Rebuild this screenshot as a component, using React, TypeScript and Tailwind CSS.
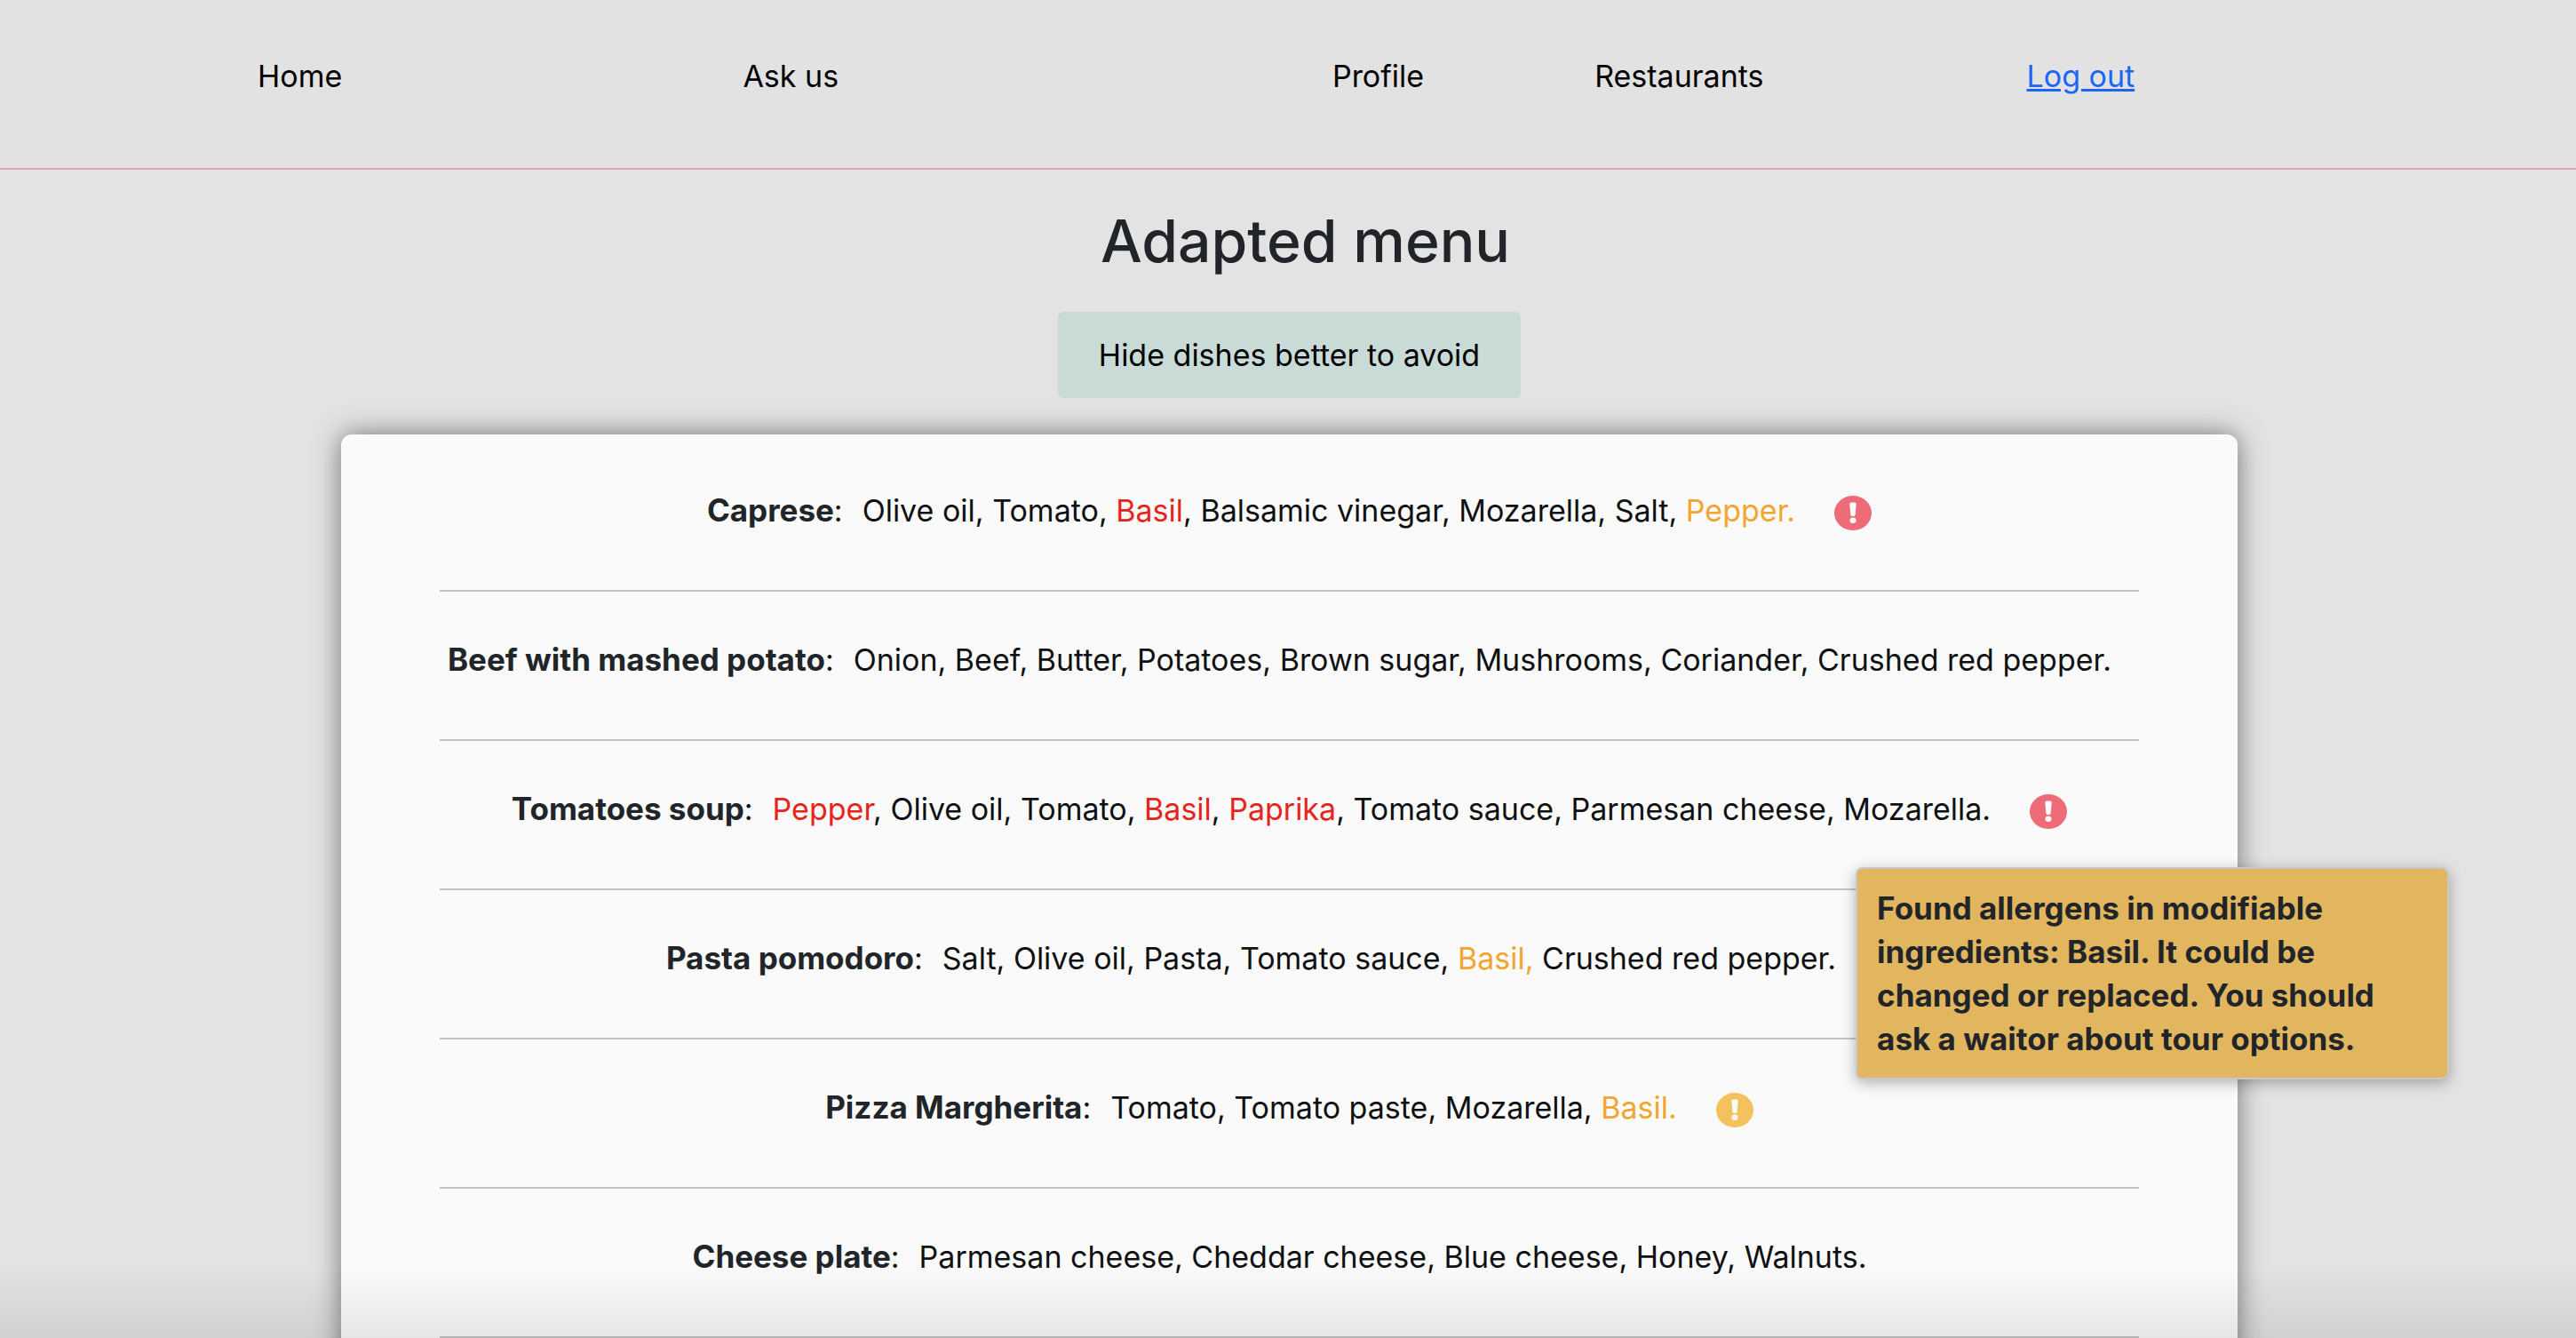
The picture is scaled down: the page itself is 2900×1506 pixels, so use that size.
type Level = 'avoid' | 'modifiable';

type Ingredient = { name: string; level?: Level };

type Dish = {
  name: string;
  ingredients: Ingredient[];
  alert?: Level;
  tooltip?: string;
};

const dishes: Dish[] = [
  {
    name: 'Caprese',
    ingredients: [
      { name: 'Olive oil' },
      { name: 'Tomato' },
      { name: 'Basil', level: 'avoid' },
      { name: 'Balsamic vinegar' },
      { name: 'Mozarella' },
      { name: 'Salt' },
      { name: 'Pepper', level: 'modifiable' },
    ],
    alert: 'avoid',
  },
  {
    name: 'Beef with mashed potato',
    ingredients: [
      { name: 'Onion' },
      { name: 'Beef' },
      { name: 'Butter' },
      { name: 'Potatoes' },
      { name: 'Brown sugar' },
      { name: 'Mushrooms' },
      { name: 'Coriander' },
      { name: 'Crushed red pepper' },
    ],
  },
  {
    name: 'Tomatoes soup',
    ingredients: [
      { name: 'Pepper', level: 'avoid' },
      { name: 'Olive oil' },
      { name: 'Tomato' },
      { name: 'Basil', level: 'avoid' },
      { name: 'Paprika', level: 'avoid' },
      { name: 'Tomato sauce' },
      { name: 'Parmesan cheese' },
      { name: 'Mozarella' },
    ],
    alert: 'avoid',
  },
  {
    name: 'Pasta pomodoro',
    ingredients: [
      { name: 'Salt' },
      { name: 'Olive oil' },
      { name: 'Pasta' },
      { name: 'Tomato sauce' },
      { name: 'Basil', level: 'modifiable' },
      { name: 'Crushed red pepper' },
    ],
    alert: 'modifiable',
    tooltip:
      'Found allergens in modifiable ingredients: Basil. It could be changed or replaced. You should ask a waitor about tour options.',
  },
  {
    name: 'Pizza Margherita',
    ingredients: [
      { name: 'Tomato' },
      { name: 'Tomato paste' },
      { name: 'Mozarella' },
      { name: 'Basil', level: 'modifiable' },
    ],
    alert: 'modifiable',
  },
  {
    name: 'Cheese plate',
    ingredients: [
      { name: 'Parmesan cheese' },
      { name: 'Cheddar cheese' },
      { name: 'Blue cheese' },
      { name: 'Honey' },
      { name: 'Walnuts' },
    ],
  },
];

function AlertIcon({ kind }: { kind: Level }) {
  return (
    <svg
      viewBox="0 0 42 39"
      className={kind === 'avoid' ? 'h-[39px] w-[42px] text-[#ee6b78]' : 'h-[39px] w-[42px] text-[#f5c15e]'}
      role="img"
      aria-label={kind === 'avoid' ? 'Better to avoid' : 'Can be modified'}
    >
      <ellipse cx="21" cy="19.5" rx="21" ry="19.5" fill="currentColor" />
      <path
        d="M17.3 9.6Q17.2 7.6 19.2 7.6H22.8Q24.8 7.6 24.7 9.6L23.6 21.6Q23.4 23.3 21 23.3Q18.6 23.3 18.4 21.6Z"
        fill="#fafafa"
      />
      <ellipse cx="21" cy="27.8" rx="3.5" ry="3.2" fill="#fafafa" />
    </svg>
  );
}

function IngredientText({ item, last }: { item: Ingredient; last: boolean }) {
  const mark = last ? '.' : ',';
  const gap = last ? '' : ' ';
  if (item.level === 'avoid') {
    return (
      <>
        <span className="text-[#e8241a]">{item.name}</span>
        {mark + gap}
      </>
    );
  }
  if (item.level === 'modifiable') {
    return (
      <>
        <span className="text-[#f3a533]">{item.name + mark}</span>
        {gap}
      </>
    );
  }
  return <>{item.name + mark + gap}</>;
}

function DishRow({ dish }: { dish: Dish }) {
  return (
    <li className="flex items-center justify-center whitespace-nowrap border-b-2 border-[#c4c4c4] pt-[51px] pb-[63px] text-[34px] leading-[52px] text-[#0f1012]">
      <p>
        <strong className="text-[35px] leading-none font-bold text-[#212529]">{dish.name}</strong>:
      </p>
      <p className="mx-[22px]">
        {dish.ingredients.map((item, i) => (
          <IngredientText key={item.name} item={item} last={i === dish.ingredients.length - 1} />
        ))}
      </p>
      {dish.alert && (
        <div className="relative mt-1 ml-[22px]">
          <AlertIcon kind={dish.alert} />
          {dish.tooltip && (
            <div
              role="tooltip"
              className="absolute -top-[86px] -left-[22px] z-10 w-[668px] whitespace-normal rounded-lg border-2 border-[#c8c8c8] bg-[#e1b65e] px-[22px] pt-[20px] pb-[19px] text-[35px] leading-[49px] font-bold text-[#212529] shadow-[0_4px_16px_rgba(0,0,0,0.3)]"
            >
              {dish.tooltip}
            </div>
          )}
        </div>
      )}
    </li>
  );
}

export default function App() {
  return (
    <div className="h-screen overflow-hidden bg-[#e3e3e3] font-['Inter','Liberation_Sans',sans-serif] text-[#212529]">
      <header className="border-b-2 border-[#e5a0b2] bg-[#e2e2e2]">
        <nav className="grid grid-cols-[546fr_663fr_295fr_486fr_618fr] pt-[61px] pb-[78px] pl-[10%] text-[34px] leading-[50px] text-black">
          <div><a href="#home">Home</a></div>
          <div><a href="#ask">Ask us</a></div>
          <div><a href="#profile">Profile</a></div>
          <div><a href="#restaurants">Restaurants</a></div>
          <div><a href="#logout" className="text-[#1a66f5] underline">Log out</a></div>
        </nav>
      </header>
      <main className="flex flex-col items-center pl-[3px]">
        <h1 className="mt-10 ml-9 text-[66px] leading-[80px] font-medium">Adapted menu</h1>
        <button
          type="button"
          className="mt-10 rounded-md bg-[#c8dbd6] px-[46px] py-6 text-[34px] leading-[49px] text-black"
        >
          Hide dishes better to avoid
        </button>
        <section className="mt-[41px] w-[73.7%] rounded-xl bg-[#fafafa] px-[111px] pt-[9px] pb-20 shadow-[0_0_30px_rgba(0,0,0,0.5)]">
          <ul>
            {dishes.map((dish) => (
              <DishRow key={dish.name} dish={dish} />
            ))}
          </ul>
        </section>
      </main>
      <div className="pointer-events-none fixed inset-x-0 bottom-0 h-20 bg-linear-to-b from-transparent to-black/8" />
    </div>
  );
}
